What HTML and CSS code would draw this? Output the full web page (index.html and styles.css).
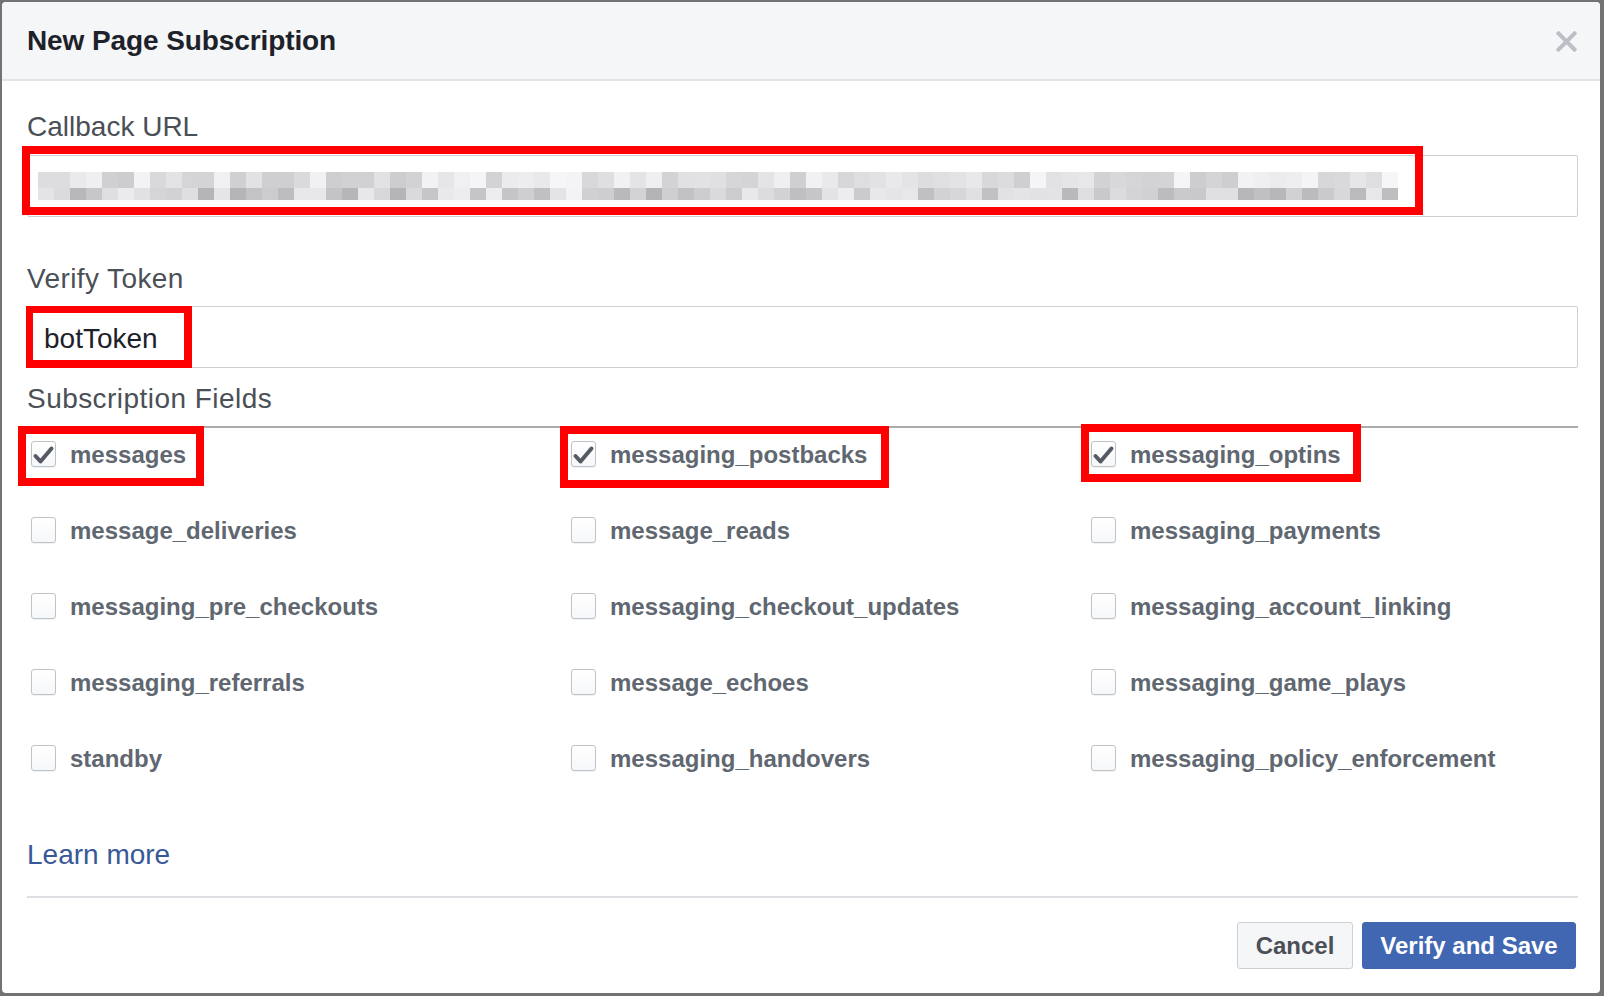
FILE: index.html
```html
<!DOCTYPE html>
<html lang="en">
<head>
<meta charset="utf-8">
<title>New Page Subscription</title>
<link rel="stylesheet" href="styles.css">
</head>
<body>
<div class="modal">
  <div class="modal-header">
    <h2 class="title">New Page Subscription</h2>
    <button class="close" aria-label="Close">
      <svg width="21" height="21" viewBox="0 0 21 21"><path d="M2.5 2.5 L18.5 18.5 M18.5 2.5 L2.5 18.5" stroke="#bcc0c6" stroke-width="4" stroke-linecap="square" fill="none"/></svg>
    </button>
  </div>
  <div class="modal-body">
    <label class="field-label">Callback URL</label>
    <div class="input input-url"><div class="pixels" id="pixels"></div></div>
    <label class="field-label label-gap label-wide">Verify Token</label>
    <div class="input input-token"><span class="input-value">botToken</span></div>
    <div class="section-title">Subscription Fields</div>
    <div class="fields">
      <div class="field"><span class="box checked"><svg viewBox="0 0 25 26"><path d="M4.5 15 L9.5 20.5 L20.5 7.5"/></svg></span><span class="field-name">messages</span></div>
      <div class="field"><span class="box checked"><svg viewBox="0 0 25 26"><path d="M4.5 15 L9.5 20.5 L20.5 7.5"/></svg></span><span class="field-name">messaging_postbacks</span></div>
      <div class="field"><span class="box checked"><svg viewBox="0 0 25 26"><path d="M4.5 15 L9.5 20.5 L20.5 7.5"/></svg></span><span class="field-name">messaging_optins</span></div>
      <div class="field"><span class="box"></span><span class="field-name">message_deliveries</span></div>
      <div class="field"><span class="box"></span><span class="field-name">message_reads</span></div>
      <div class="field"><span class="box"></span><span class="field-name">messaging_payments</span></div>
      <div class="field"><span class="box"></span><span class="field-name">messaging_pre_checkouts</span></div>
      <div class="field"><span class="box"></span><span class="field-name">messaging_checkout_updates</span></div>
      <div class="field"><span class="box"></span><span class="field-name">messaging_account_linking</span></div>
      <div class="field"><span class="box"></span><span class="field-name">messaging_referrals</span></div>
      <div class="field"><span class="box"></span><span class="field-name">message_echoes</span></div>
      <div class="field"><span class="box"></span><span class="field-name">messaging_game_plays</span></div>
      <div class="field"><span class="box"></span><span class="field-name">standby</span></div>
      <div class="field"><span class="box"></span><span class="field-name">messaging_handovers</span></div>
      <div class="field"><span class="box"></span><span class="field-name">messaging_policy_enforcement</span></div>
    </div>
    <a class="learn-more" href="#">Learn more</a>
    <div class="modal-footer">
      <button class="btn btn-cancel">Cancel</button>
      <button class="btn btn-primary">Verify and Save</button>
    </div>
  </div>
</div>
<div class="mark mark-url"></div>
<div class="mark mark-token"></div>
<div class="mark mark-messages"></div>
<div class="mark mark-postbacks"></div>
<div class="mark mark-optins"></div>
<script src="script.js"></script>
</body>
</html>
```

FILE: styles.css
```css
* { box-sizing: border-box; }
html, body { margin: 0; padding: 0; }
body {
  background: #737373;
  font-family: "Liberation Sans", Arial, Helvetica, sans-serif;
  width: 1604px;
  height: 996px;
  overflow: hidden;
  position: relative;
}
.modal {
  margin: 2px 4px 3px 2px;
  width: 1598px;
  background: #fff;
  border-radius: 4px;
  overflow: hidden;
}
.modal-header {
  height: 79px;
  background: #f5f6f7;
  border-bottom: 2px solid #e3e4e6;
  display: flex;
  align-items: center;
  justify-content: space-between;
  padding: 0 23px 0 25px;
}
.title {
  margin: 0;
  font-size: 28px;
  font-weight: bold;
  color: #1d2129;
  line-height: 32px;
  letter-spacing: -0.1px;
}
.close {
  border: 0;
  background: none;
  padding: 0;
  width: 21px;
  height: 21px;
  display: block;
  margin-top: 2px;
}
.close svg { display: block; }
.modal-body {
  padding: 29px 22px 24px 25px;
}
.field-label {
  display: block;
  font-size: 28px;
  line-height: 32px;
  color: #4b4f56;
  padding-top: 1px;
  height: 32px;
}
.label-wide { letter-spacing: 0.4px; }
.label-gap { margin-top: 45px; }
.input {
  height: 62px;
  border: 1px solid #ccd0d5;
  border-radius: 2px;
  background: #fff;
}
.input-url { margin-top: 13px; padding: 16px 10px 0; }
.input-token {
  margin-top: 12px;
  display: flex;
  align-items: center;
  padding: 3px 16px 0;
}
.input-value {
  font-size: 28px;
  color: #1d2129;
}
.pixels {
  display: grid;
  grid-template-columns: repeat(85, 16px);
  grid-template-rows: 16px 12px;
}
.pixels span { display: block; }
.section-title {
  margin-top: 14px;
  font-size: 28px;
  line-height: 32px;
  height: 46px;
  color: #4b4f56;
  padding-top: 1px;
  letter-spacing: 0.45px;
  border-bottom: 2px solid #a9abae;
}
.fields {
  margin-top: 1px;
  padding-left: 4px;
  display: grid;
  grid-template-columns: 540px 520px 1fr;
  grid-auto-rows: 50px;
  row-gap: 26px;
}
.field {
  display: flex;
  align-items: center;
  gap: 14px;
}
.box {
  width: 25px;
  height: 26px;
  border: 1px solid #bec3c9;
  border-radius: 3px;
  background: linear-gradient(#fff, #f6f7f9);
  box-shadow: 0 1px 1px rgba(0,0,0,0.06);
  flex: none;
  position: relative;
}
.box svg {
  position: absolute;
  left: -1px;
  top: -1px;
  width: 25px;
  height: 26px;
}
.box svg path {
  fill: none;
  stroke: #555a64;
  stroke-width: 4;
  stroke-linecap: round;
  stroke-linejoin: round;
}
.field-name {
  font-size: 24px;
  font-weight: bold;
  color: #606770;
  padding-top: 1px;
}
.learn-more {
  display: block;
  margin-top: 55px;
  font-size: 28px;
  line-height: 32px;
  height: 32px;
  padding-top: 1px;
  color: #385898;
  text-decoration: none;
  width: max-content;
}
.modal-footer {
  margin-top: 26px;
  border-top: 2px solid #dddfe2;
  padding-top: 24px;
  display: flex;
  justify-content: flex-end;
  gap: 9px;
  padding-right: 2px;
}
.btn {
  height: 47px;
  font-family: "Liberation Sans", Arial, Helvetica, sans-serif;
  font-size: 24px;
  font-weight: bold;
  border-radius: 3px;
  padding: 0;
  line-height: 45px;
}
.btn-cancel {
  width: 116px;
  background: #f5f6f7;
  border: 1px solid #ccd0d5;
  color: #4b4f56;
}
.btn-primary {
  width: 214px;
  background: #4267b2;
  border: 1px solid #4267b2;
  color: #fff;
}
.mark {
  position: absolute;
  border: 8px solid #ff0000;
  pointer-events: none;
}
.mark-url { left: 22px; top: 146px; width: 1401px; height: 69px; }
.mark-token { left: 26px; top: 306px; width: 166px; height: 62px; border-width: 7px 8px 8px 7px; }
.mark-messages { left: 18px; top: 426px; width: 186px; height: 60px; }
.mark-postbacks { left: 560px; top: 426px; width: 329px; height: 62px; }
.mark-optins { left: 1081px; top: 424px; width: 280px; height: 58px; }
```

FILE: script.js
```js
(function () {
  var grid = document.getElementById('pixels');
  var seed = 11;
  function rnd() {
    seed = (seed * 1103515245 + 12345) % 2147483648;
    return seed / 2147483648;
  }
  var cols = 85;
  var rows = [[], []];
  for (var c = 0; c < cols; c++) {
    var blank = rnd() < 0.04;
    for (var r = 0; r < 2; r++) {
      var v;
      if (blank) {
        v = 240 + Math.floor(rnd() * 10);
      } else if (r === 0) {
        v = 205 + Math.floor(rnd() * 42);
      } else {
        v = 180 + Math.floor(rnd() * 58);
      }
      rows[r].push(v);
    }
  }
  for (var r2 = 0; r2 < 2; r2++) {
    for (var c2 = 0; c2 < cols; c2++) {
      var s = document.createElement('span');
      var g = rows[r2][c2];
      s.style.background = 'rgb(' + g + ',' + g + ',' + (g + 2 > 255 ? 255 : g + 2) + ')';
      grid.appendChild(s);
    }
  }
})();
```
